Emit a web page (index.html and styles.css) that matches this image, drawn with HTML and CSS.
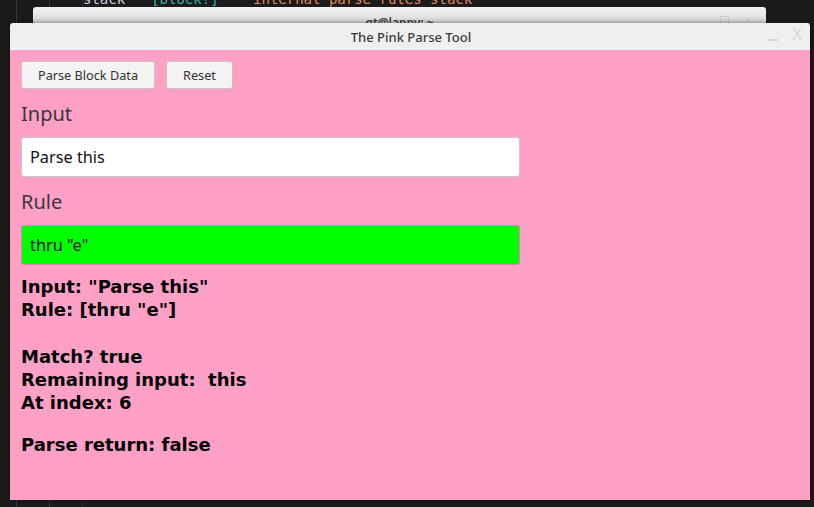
FILE: index.html
```html
<!DOCTYPE html>
<html>
<head>
<meta charset="utf-8">
<link rel="stylesheet" href="styles.css">
</head>
<body>
<div class="desktop">
  <div class="term-lines">
    <span class="vline v1"></span>
    <span class="vline v2"></span>
    <span class="vline v3"></span>
  </div>
  <div class="term-text"><span class="t-plain">stack</span><span class="t-type">[block!]</span><span class="t-str">"internal parse rules stack"</span></div>

  <div class="win back-win">
    <div class="back-title">gt@lappy: ~</div>
    <div class="back-ctrls"><span class="sq"></span><span class="bx">X</span></div>
  </div>

  <div class="win main-win">
    <div class="titlebar">
      <span class="title">The Pink Parse Tool</span>
      <div class="ctrls"><span class="min"></span><span class="close">X</span></div>
    </div>
    <div class="content">
      <div class="buttons">
        <button class="btn">Parse Block Data</button>
        <button class="btn">Reset</button>
      </div>
      <div class="label">Input</div>
      <div class="field">Parse this</div>
      <div class="label">Rule</div>
      <div class="field green">thru "e"</div>
      <div class="output">
        <div class="line">Input: "Parse this"</div>
        <div class="line">Rule: [thru "e"]</div>
        <div class="line blank"></div>
        <div class="line">Match? true</div>
        <div class="line">Remaining input:&nbsp; this</div>
        <div class="line">At index: 6</div>
      </div>
      <div class="output result">
        <div class="line">Parse return: false</div>
      </div>
    </div>
  </div>
</div>
</body>
</html>
```

FILE: styles.css
```css
html, body {
  margin: 0;
  padding: 0;
  width: 814px;
  height: 507px;
  overflow: hidden;
}
.desktop {
  position: relative;
  width: 814px;
  height: 507px;
  background: #1b1b1b;
  font-family: "Noto Sans", "Open Sans", sans-serif;
}
.vline {
  position: absolute;
  top: 0;
  bottom: 0;
  width: 1px;
  background: #3a3a3a;
}
.v1 { left: 16px; }
.v2 { left: 49px; }
.v3 { left: 82px; background: #2e2e2e; }
.term-text {
  position: absolute;
  left: 83px;
  top: -9px;
  font-family: "DejaVu Sans Mono", monospace;
  font-size: 14px;
  white-space: pre;
  display: flex;
  gap: 26px;
}
.t-plain { color: #c8d0e0; }
.t-type { color: #2fb6a6; }
.t-str { color: #e08a5a; }

.win {
  position: absolute;
}
.back-win {
  left: 33px;
  top: 7px;
  width: 733px;
  height: 16px;
  overflow: hidden;
  background: linear-gradient(#f2f2f2, #dcdcdc);
  border-radius: 3px 3px 0 0;
}
.back-title {
  position: absolute;
  left: 0;
  right: 0;
  top: 7px;
  text-align: center;
  font-size: 12px;
  font-weight: 600;
  color: #444;
}
.back-ctrls {
  position: absolute;
  right: 14px;
  top: 6px;
  display: flex;
  gap: 16px;
  color: #cfcfcf;
  font-size: 12px;
}
.back-ctrls .sq {
  width: 7px;
  height: 9px;
  border: 1px solid #cfcfcf;
  margin-top: 3px;
}
.main-win {
  left: 10px;
  top: 23px;
  width: 800px;
  height: 477px;
  display: flex;
  flex-direction: column;
  box-shadow: 0 0 6px rgba(0,0,0,0.5);
}
.titlebar {
  height: 27px;
  background: #efefef;
  display: flex;
  align-items: center;
  justify-content: center;
  position: relative;
  border-radius: 3px 3px 0 0;
}
.title {
  font-size: 13px;
  font-weight: 500;
  color: #3b3b3b;
  margin-left: 2px;
}
.ctrls {
  position: absolute;
  right: 8px;
  top: 5px;
  display: flex;
  align-items: center;
  gap: 14px;
}
.ctrls .min {
  width: 10px;
  height: 2px;
  background: #d4d8dc;
  margin-top: 9px;
}
.ctrls .close {
  color: #d4d8dc;
  font-size: 15px;
  font-family: "DejaVu Sans", sans-serif;
  line-height: 15px;
}
.content {
  flex: 1;
  background: #ffa0c7;
  padding: 11px 11px;
  display: flex;
  flex-direction: column;
}
.buttons {
  display: flex;
  gap: 11px;
}
.btn {
  height: 28px;
  padding: 0 16px;
  background: #f3f3f3;
  border: 1px solid #c4c4c4;
  border-radius: 3px;
  font-family: "Noto Sans", sans-serif;
  font-size: 12.7px;
  color: #333;
}
.label {
  font-size: 20px;
  color: #3a3838;
  margin-top: 10px;
  line-height: 30px;
  font-weight: 400;
}
.field {
  width: 499px;
  height: 40px;
  box-sizing: border-box;
  margin-top: 8px;
  background: #fff;
  border: 1px solid #c8c8c8;
  border-radius: 3px;
  font-size: 16.3px;
  color: #111;
  padding-left: 8px;
  display: flex;
  align-items: center;
}
.field.green {
  background: #00ff00;
  border-color: #d08aa8;
}
.output {
  margin-top: 10px;
  font-family: "DejaVu Sans", sans-serif;
  font-weight: bold;
  font-size: 18px;
  color: #000;
}
.line {
  line-height: 23.3px;
  height: 23.3px;
}
.result {
  margin-top: 18px;
}
```
